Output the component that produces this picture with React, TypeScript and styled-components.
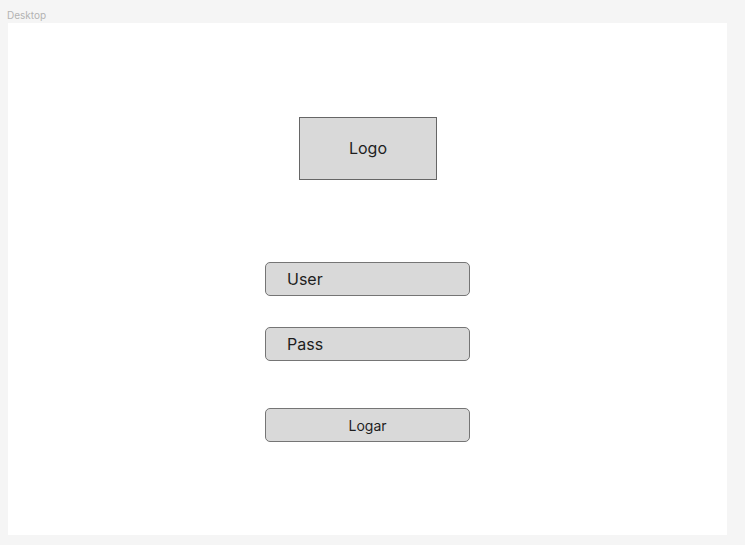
import React from "react";
import styled, { createGlobalStyle } from "styled-components";

const Global = createGlobalStyle`
  html, body { margin: 0; padding: 0; background: #f5f5f5; }
  body { font-family: Inter, "Noto Sans", sans-serif; }
`;

const Page = styled.div`
  width: 745px;
  height: 545px;
  background: #f5f5f5;
  display: flex;
  flex-direction: column;
  box-sizing: border-box;
  padding: 0 0 0 8px;
`;

const FrameLabel = styled.div`
  font-size: 10px;
  line-height: 12px;
  color: #b3b3b3;
  margin: 9px 0 2px -1px;
  height: 12px;
`;

const Frame = styled.div`
  width: 719px;
  height: 512px;
  background: #ffffff;
  display: flex;
  flex-direction: column;
  align-items: center;
  box-sizing: border-box;
  padding-top: 94px;
`;

const LogoBox = styled.div`
  width: 138px;
  height: 63px;
  box-sizing: border-box;
  background: #d9d9d9;
  border: 1px solid #666666;
  display: flex;
  align-items: center;
  justify-content: center;
  padding-bottom: 2px;
  font-size: 16px;
  color: #1e1e1e;
  margin-left: 1px;
`;

const Field = styled.div<{ $center?: boolean; $top: number; $size?: number }>`
  width: 205px;
  height: 34px;
  box-sizing: border-box;
  background: #d9d9d9;
  border: 1px solid #757575;
  border-radius: 5px;
  display: flex;
  align-items: center;
  justify-content: ${(p) => (p.$center ? "center" : "flex-start")};
  padding-left: ${(p) => (p.$center ? "0" : "21px")};
  margin-top: ${(p) => p.$top}px;
  font-size: ${(p) => p.$size ?? 16}px;
  color: #1e1e1e;
`;

export default function App() {
  return (
    <>
      <Global />
      <Page>
        <FrameLabel>Desktop</FrameLabel>
        <Frame>
          <LogoBox>Logo</LogoBox>
          <Field $top={82}>User</Field>
          <Field $top={31}>Pass</Field>
          <Field $top={47} $center $size={14}>
            Logar
          </Field>
        </Frame>
      </Page>
    </>
  );
}
